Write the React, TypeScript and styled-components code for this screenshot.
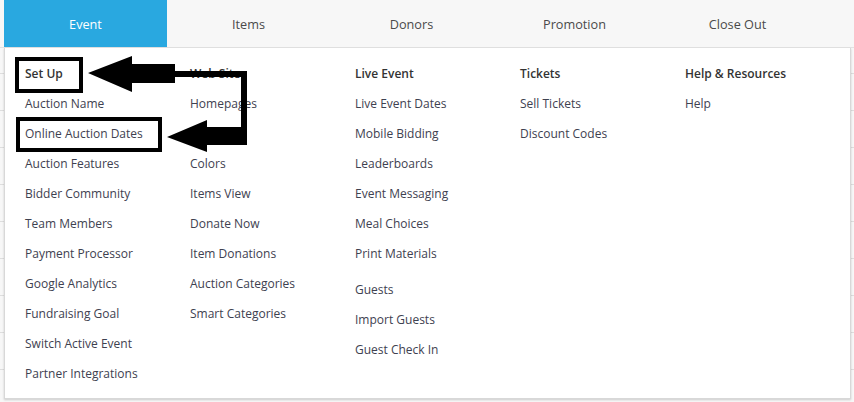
import styled, { createGlobalStyle } from 'styled-components';

const GlobalStyle = createGlobalStyle`
  html, body {
    margin: 0;
    padding: 0;
    background: #f4f4f4;
    font-family: 'Open Sans', 'Noto Sans', sans-serif;
  }
`;

const Page = styled.div`
  position: relative;
  width: 854px;
  height: 402px;
  overflow: hidden;
  background: repeating-linear-gradient(
    to bottom,
    #f7f7f7 0,
    #f7f7f7 36px,
    #dedede 36px,
    #dedede 37px
  );
`;

const NavBar = styled.nav`
  display: flex;
  height: 48px;
  padding-left: 4px;
  background: #f7f7f7;
  border-bottom: 1px solid #e2e2e2;
  box-sizing: border-box;
`;

const Tab = styled.a<{ active?: boolean }>`
  width: 163px;
  display: flex;
  align-items: center;
  justify-content: center;
  font-size: 12.7px;
  color: ${(p) => (p.active ? '#ffffff' : '#4a4a4a')};
  background: ${(p) => (p.active ? '#29a8e0' : 'transparent')};
  cursor: pointer;
`;

const Dropdown = styled.div`
  margin-left: 4px;
  width: 847px;
  height: 351px;
  box-sizing: border-box;
  background: #fff;
  border: 1px solid #d8d8d8;
  border-top: none;
  box-shadow: 0 1px 2px rgba(0, 0, 0, 0.18);
  padding: 11px 0 0 20px;
  display: grid;
  grid-template-columns: repeat(5, 165px);
`;

const Column = styled.div`
  display: flex;
  flex-direction: column;
`;

const Heading = styled.div`
  height: 30px;
  line-height: 30px;
  font-size: 12px;
  font-weight: 600;
  color: #333;
`;

const Group = styled.div<{ gap?: number }>`
  display: flex;
  flex-direction: column;
  margin-top: ${(p) => p.gap ?? 0}px;
`;

const Link = styled.a`
  height: 30px;
  line-height: 30px;
  font-size: 12px;
  color: #3e4150;
  white-space: nowrap;
  cursor: pointer;
`;

const Annotation = styled.svg`
  position: absolute;
  left: 0;
  top: 0;
  pointer-events: none;
`;

type Col = { title: string; groups: string[][] };

const columns: Col[] = [
  {
    title: 'Set Up',
    groups: [
      [
        'Auction Name',
        'Online Auction Dates',
        'Auction Features',
        'Bidder Community',
        'Team Members',
        'Payment Processor',
        'Google Analytics',
        'Fundraising Goal',
        'Switch Active Event',
        'Partner Integrations',
      ],
    ],
  },
  {
    title: 'Web Site',
    groups: [
      [
        'Homepages',
        '',
        'Colors',
        'Items View',
        'Donate Now',
        'Item Donations',
        'Auction Categories',
        'Smart Categories',
      ],
    ],
  },
  {
    title: 'Live Event',
    groups: [
      [
        'Live Event Dates',
        'Mobile Bidding',
        'Leaderboards',
        'Event Messaging',
        'Meal Choices',
        'Print Materials',
      ],
      ['Guests', 'Import Guests', 'Guest Check In'],
    ],
  },
  { title: 'Tickets', groups: [['Sell Tickets', 'Discount Codes']] },
  { title: 'Help & Resources', groups: [['Help']] },
];

const tabs = ['Event', 'Items', 'Donors', 'Promotion', 'Close Out'];

const App = () => {
  return (
    <>
      <GlobalStyle />
      <Page>
        <NavBar>
          {tabs.map((t, i) => (
            <Tab key={t} active={i === 0}>
              {t}
            </Tab>
          ))}
        </NavBar>
        <Dropdown>
          {columns.map((c) => (
            <Column key={c.title}>
              <Heading>{c.title}</Heading>
              {c.groups.map((g, gi) => (
                <Group key={gi} gap={gi > 0 ? 6 : 0}>
                  {g.map((l, li) => (
                    <Link key={li}>{l}</Link>
                  ))}
                </Group>
              ))}
            </Column>
          ))}
        </Dropdown>
        <Annotation width="854" height="402" viewBox="0 0 854 402">
          <rect x="17" y="59" width="64" height="32" fill="none" stroke="#000" strokeWidth="4" />
          <rect x="18" y="119" width="142" height="31" fill="none" stroke="#000" strokeWidth="4" />
          <path
            d="M88 73 L132 56 L132 64 L175 64 L175 71 L247 71 L247 145 L207 145 L207 152 L167 137 L207 120 L207 127 L241 127 L241 77 L175 77 L175 83 L132 83 L132 92 Z"
            fill="#000"
          />
        </Annotation>
      </Page>
    </>
  );
};

export default App;
